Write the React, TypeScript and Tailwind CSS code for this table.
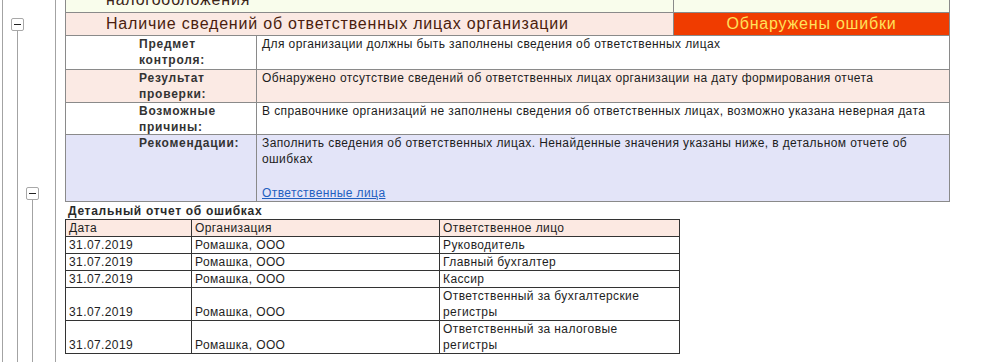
const detailRows = [
  { date: "31.07.2019", org: "Ромашка, ООО", person: "Руководитель" },
  { date: "31.07.2019", org: "Ромашка, ООО", person: "Главный бухгалтер" },
  { date: "31.07.2019", org: "Ромашка, ООО", person: "Кассир" },
  { date: "31.07.2019", org: "Ромашка, ООО", person: "Ответственный за бухгалтерские регистры" },
  { date: "31.07.2019", org: "Ромашка, ООО", person: "Ответственный за налоговые регистры" },
];

const Gutter = () => (
  <svg width="65" height="362" className="shrink-0 block">
    <line x1="2.5" y1="0" x2="2.5" y2="362" stroke="#a3a3a3" />
    <line x1="55.5" y1="0" x2="55.5" y2="362" stroke="#a3a3a3" />
    {/* first group */}
    <line x1="17.5" y1="30" x2="17.5" y2="362" stroke="#a3a3a3" />
    <rect x="11.5" y="18.5" width="12" height="12" rx="1.5" fill="#fff" stroke="#a8a8a8" />
    <line x1="14" y1="24.5" x2="21" y2="24.5" stroke="#222" />
    {/* second group */}
    <line x1="32.5" y1="199" x2="32.5" y2="362" stroke="#a3a3a3" />
    <rect x="26.5" y="187.5" width="12" height="12" rx="1.5" fill="#fff" stroke="#a8a8a8" />
    <line x1="29" y1="193.5" x2="36" y2="193.5" stroke="#222" />
  </svg>
);

const InfoRow = ({ label, bg, children, h }: { label: string; bg: string; children: React.ReactNode; h: string }) => (
  <div className={`flex border-b border-[#8a8a8a] ${bg} ${h}`}>
    <div className="w-[191px] shrink-0 border-r border-[#8a8a8a] pl-[73px] pr-[6px] font-bold tracking-[0.75px] text-[#333]">{label}</div>
    <div className="flex-1 pl-[5px] pr-[4px] text-[#1c1c1c]">{children}</div>
  </div>
);

export default function App() {
  return (
    <div className="flex h-[362px] w-[991px] overflow-hidden bg-white text-[12px] leading-[16px] tracking-[0.4px] font-['Liberation_Sans',Arial,sans-serif]">
      <Gutter />
      <div className="flex flex-col">
        {/* check block */}
        <div className="w-[885px] border-x border-[#8a8a8a]">
          <div className="flex h-[13px] border-b border-[#8a8a8a] bg-[#f9fdec]">
            <div className="w-[608px] shrink-0 overflow-hidden border-r border-[#8a8a8a] pl-[40px] text-[16px] leading-[18px] tracking-[0.8px] text-[#3a2418]">
              <div className="mt-[-9px]">налогообложения</div>
            </div>
            <div className="flex-1" />
          </div>
          <div className="flex h-[23px] border-b border-[#8a8a8a] text-[16px] leading-[22px] tracking-[0.8px]">
            <div className="w-[608px] shrink-0 border-r border-[#8a8a8a] bg-[#fbe9e3] pl-[40px] text-[#4a1d0e]">
              Наличие сведений об ответственных лицах организации
            </div>
            <div className="flex-1 bg-[#f03c00] text-center text-[#ffe25a]">Обнаружены ошибки</div>
          </div>
          <InfoRow label="Предмет контроля:" bg="bg-white" h="h-[34px]">
            Для организации должны быть заполнены сведения об ответственных лицах
          </InfoRow>
          <InfoRow label="Результат проверки:" bg="bg-[#fbeae4]" h="h-[33px]">
            Обнаружено отсутствие сведений об ответственных лицах организации на дату формирования отчета
          </InfoRow>
          <InfoRow label="Возможные причины:" bg="bg-white" h="h-[32px]">
            В справочнике организаций не заполнены сведения об ответственных лицах, возможно указана неверная дата
          </InfoRow>
          <InfoRow label="Рекомендации:" bg="bg-[#e3e4f8]" h="h-[67px]">
            <div>
              Заполнить сведения об ответственных лицах. Ненайденные значения указаны ниже, в детальном отчете об ошибках
            </div>
            <div className="h-[18px]" />
            <a href="#" className="text-[#1f5fc0] underline">Ответственные лица</a>
          </InfoRow>
        </div>

        {/* detail report */}
        <div className="pl-[3px] pt-[1px] font-bold tracking-[0.7px] text-[#2a2a2a]">Детальный отчет об ошибках</div>
        <table className="w-[614px] table-fixed border-collapse text-[#1e1e1e]">
          <colgroup>
            <col className="w-[126px]" />
            <col className="w-[248px]" />
            <col className="w-[240px]" />
          </colgroup>
          <thead>
            <tr className="bg-[#fce9e2]">
              <td className="border border-[#333] px-[3px] py-0 font-normal">Дата</td>
              <td className="border border-[#333] px-[3px] py-0">Организация</td>
              <td className="border border-[#333] px-[3px] py-0">Ответственное лицо</td>
            </tr>
          </thead>
          <tbody>
            {detailRows.map((r, i) => (
              <tr key={i}>
                <td className="border border-[#333] px-[3px] py-0 align-bottom">{r.date}</td>
                <td className="border border-[#333] px-[3px] py-0 align-bottom">{r.org}</td>
                <td className="border border-[#333] px-[3px] py-0 pr-[20px] align-top">{r.person}</td>
              </tr>
            ))}
          </tbody>
        </table>
      </div>
    </div>
  );
}
